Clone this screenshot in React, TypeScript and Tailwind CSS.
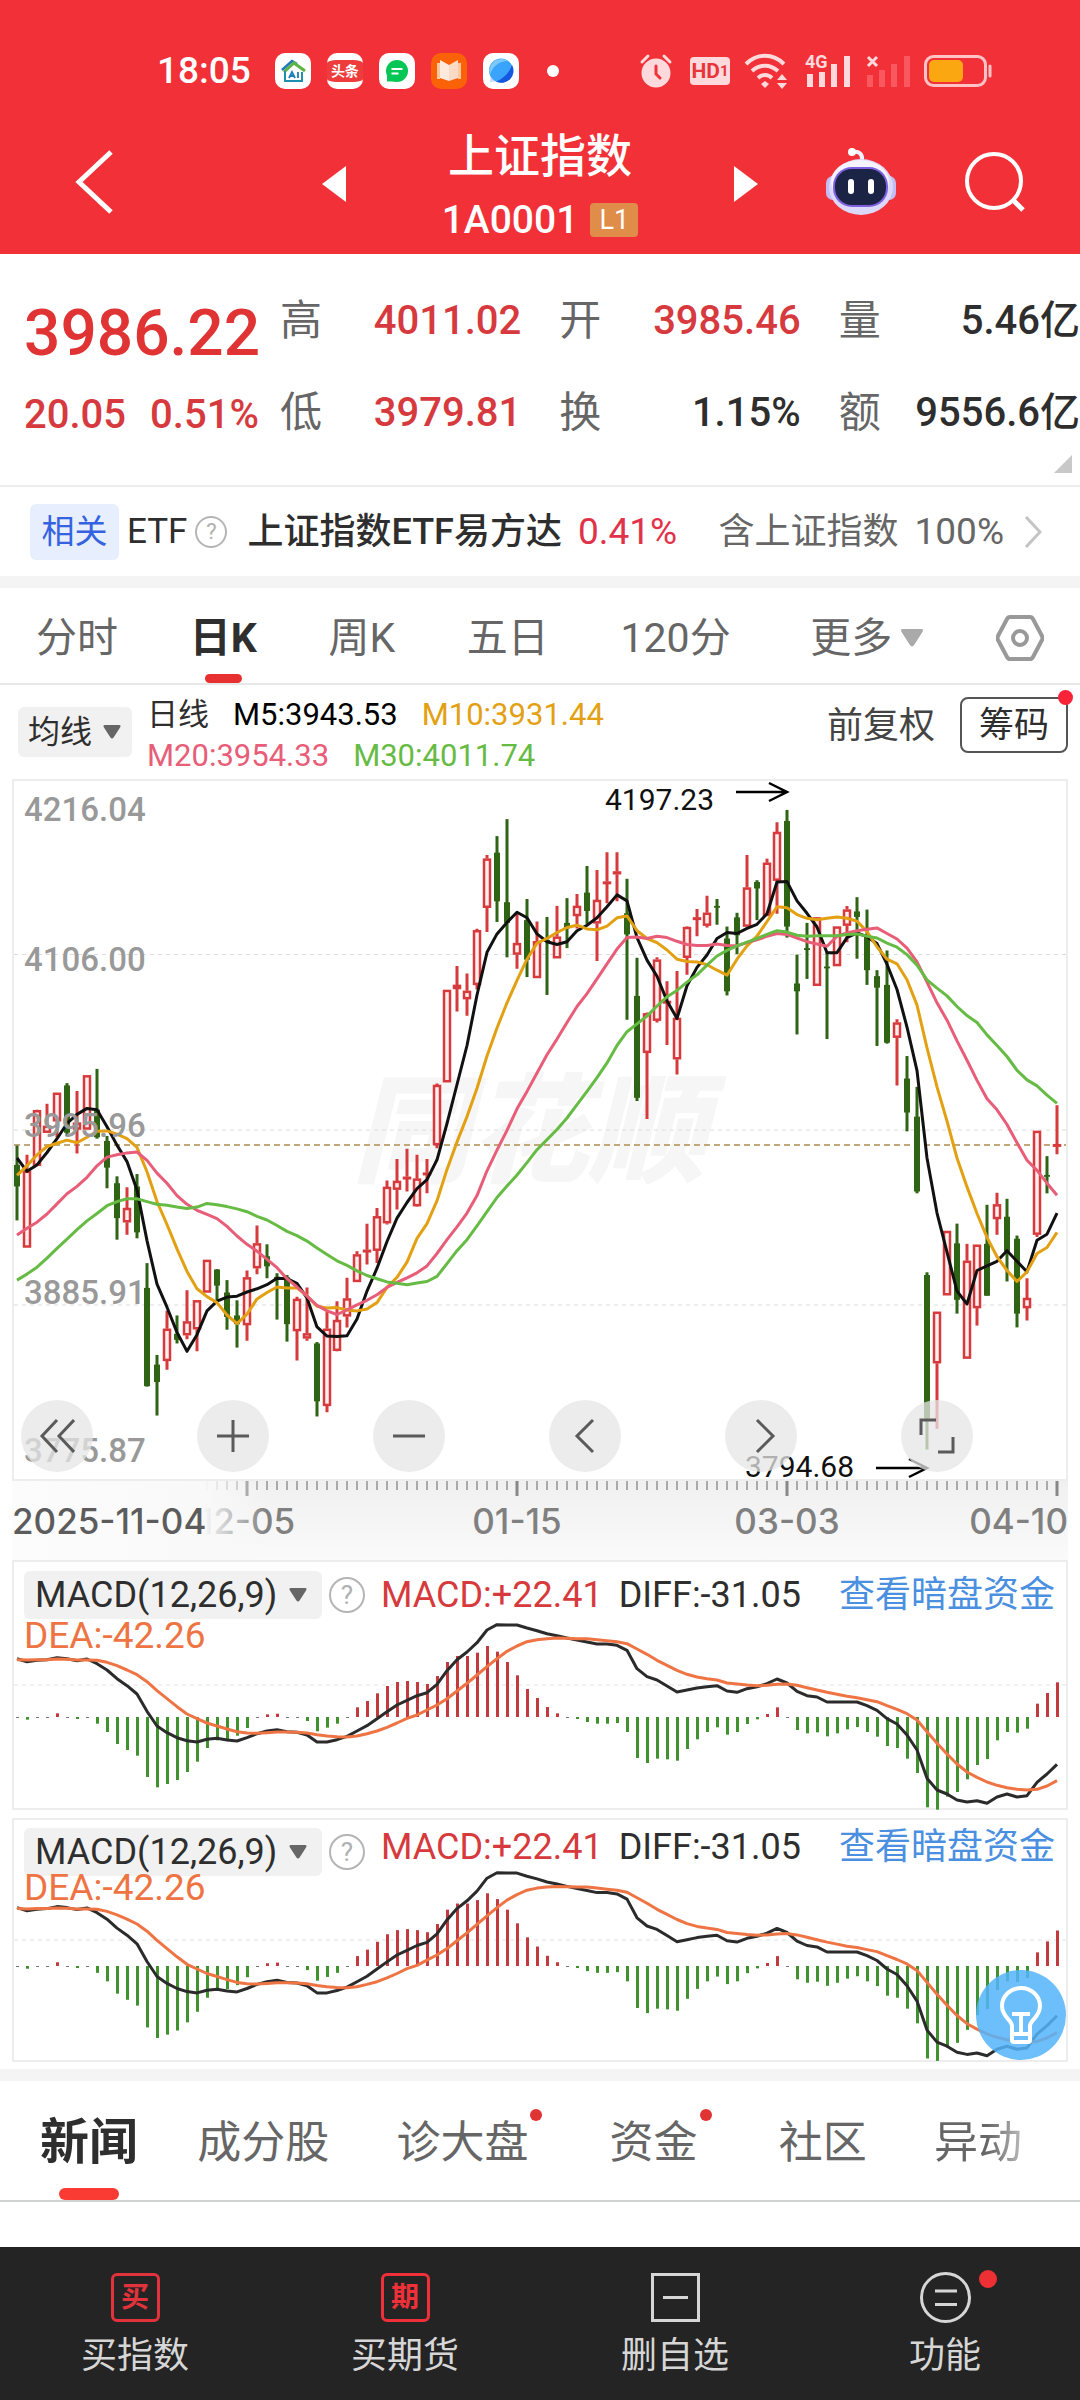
import React from "react";

type Candle = [up: 0 | 1, high: number, top: number, bottom: number, low: number];

const candles: Candle[] = [
  [0, 818, 860, 907, 981], [1, 838, 873, 1040, 1040], [1, 740, 741, 862, 862], [1, 727, 775, 790, 790],
  [1, 703, 703, 765, 800], [0, 682, 687, 790, 798], [1, 699, 768, 783, 835], [1, 665, 665, 783, 783],
  [0, 651, 740, 800, 803], [0, 797, 808, 866, 911], [0, 885, 900, 976, 1023], [1, 909, 954, 985, 1012],
  [0, 880, 907, 1007, 1020], [0, 1074, 1128, 1342, 1343], [0, 1274, 1295, 1333, 1406], [1, 1178, 1217, 1287, 1306],
  [0, 1188, 1228, 1241, 1249], [1, 1133, 1201, 1231, 1240], [1, 1155, 1155, 1218, 1266], [1, 1067, 1067, 1138, 1138],
  [0, 1087, 1088, 1123, 1155], [0, 1111, 1138, 1191, 1219], [0, 1155, 1188, 1207, 1258], [1, 1090, 1105, 1209, 1243],
  [1, 992, 1031, 1085, 1098], [0, 1033, 1059, 1081, 1107], [0, 1096, 1104, 1108, 1197], [0, 1100, 1105, 1207, 1245],
  [1, 1147, 1152, 1222, 1286], [1, 1127, 1227, 1238, 1243], [0, 1246, 1249, 1375, 1408], [1, 1180, 1217, 1385, 1399],
  [1, 1157, 1198, 1265, 1266], [1, 1106, 1151, 1190, 1214], [1, 1048, 1055, 1115, 1115], [1, 988, 1045, 1049, 1077],
  [1, 954, 972, 1047, 1074], [1, 894, 908, 987, 990], [1, 847, 895, 914, 957], [1, 825, 886, 890, 918],
  [1, 838, 890, 950, 951], [1, 847, 877, 881, 922], [1, 683, 686, 817, 824], [1, 479, 479, 680, 680],
  [1, 427, 468, 477, 526], [1, 443, 481, 499, 535], [1, 346, 349, 468, 478], [1, 185, 193, 300, 353],
  [0, 144, 180, 286, 331], [0, 107, 288, 333, 408], [1, 312, 377, 402, 433], [0, 281, 327, 413, 451],
  [1, 330, 373, 453, 453], [0, 320, 370, 374, 490], [1, 296, 363, 410, 410], [0, 279, 333, 345, 388],
  [1, 270, 296, 318, 345], [0, 209, 267, 307, 335], [1, 218, 283, 334, 416], [1, 179, 243, 247, 290],
  [1, 179, 221, 227, 286], [0, 237, 312, 358, 544], [0, 409, 492, 714, 721], [1, 528, 530, 616, 760],
  [1, 408, 413, 546, 550], [1, 460, 503, 507, 599], [1, 438, 540, 630, 663], [1, 341, 342, 409, 446],
  [1, 303, 321, 325, 362], [1, 274, 311, 339, 343], [0, 281, 296, 300, 337], [0, 341, 367, 482, 491],
  [0, 311, 321, 360, 401], [1, 185, 256, 341, 341], [0, 240, 244, 258, 327], [1, 193, 202, 318, 318],
  [1, 114, 135, 241, 313], [0, 87, 111, 341, 365], [0, 402, 465, 482, 576], [0, 333, 388, 392, 455],
  [1, 321, 321, 470, 470], [0, 395, 428, 432, 586], [1, 341, 341, 427, 427], [1, 296, 304, 339, 375],
  [0, 277, 308, 320, 411], [0, 304, 360, 436, 468], [0, 436, 449, 474, 601], [0, 393, 468, 594, 596],
  [1, 543, 550, 583, 687], [0, 623, 672, 746, 787], [0, 690, 755, 918, 922], [0, 1094, 1100, 1412, 1480],
  [1, 1180, 1180, 1292, 1435], [1, 1004, 1004, 1144, 1144], [0, 988, 1031, 1154, 1184], [1, 1032, 1069, 1282, 1282],
  [1, 1034, 1034, 1172, 1210], [0, 947, 1032, 1145, 1145], [1, 921, 946, 978, 1012], [0, 934, 973, 1049, 1114],
  [0, 1014, 1021, 1184, 1214], [1, 1107, 1150, 1172, 1199], [1, 786, 786, 1012, 1017], [0, 841, 882, 886, 922],
  [1, 730, 815, 820, 837],
];

const m5 = [
  845, 874, 860, 833, 803, 770, 750, 737, 740, 777, 817, 853, 915, 1025, 1120, 1170, 1225, 1266, 1230, 1178, 1157, 1148, 1146,
  1137, 1130, 1121, 1107, 1108, 1118, 1150, 1213, 1233, 1234, 1232, 1196, 1135, 1085, 1027, 976, 942, 912, 892, 849, 770, 685,
  600, 490, 397, 357, 332, 310, 322, 357, 374, 380, 374, 350, 338, 322, 298, 272, 285, 365, 414, 449, 503, 541, 470, 430, 403,
  367, 354, 356, 345, 336, 313, 244, 243, 285, 312, 342, 398, 398, 365, 355, 363, 378, 423, 478, 560, 655, 845, 965, 1050,
  1135, 1163, 1090, 1080, 1070, 1047, 1070, 1093, 1024, 1011, 965,
];
const m10 = [
  883, 862, 838, 820, 813, 806, 812, 800, 787, 786, 793, 803, 822, 875, 940, 990, 1043, 1092, 1130, 1147, 1160, 1187, 1206,
  1185, 1152, 1138, 1126, 1128, 1128, 1145, 1168, 1172, 1171, 1176, 1178, 1174, 1160, 1127, 1105, 1072, 1020, 988, 938, 870,
  810, 755, 693, 623, 562, 507, 458, 412, 377, 367, 354, 343, 338, 346, 348, 340, 322, 318, 350, 367, 376, 392, 412, 417, 418,
  424, 436, 447, 412, 383, 362, 330, 298, 300, 315, 323, 326, 323, 320, 323, 329, 352, 385, 412, 422, 457, 512, 605, 690, 765,
  845, 908, 966, 1018, 1060, 1090, 1114, 1093, 1053, 1040, 1007,
];
const m20 = [
  1013, 998, 985, 967, 945, 923, 907, 887, 862, 843, 838, 834, 832, 850, 878, 900, 927, 946, 959, 968, 977, 994, 1015, 1033,
  1048, 1066, 1084, 1108, 1126, 1146, 1166, 1178, 1186, 1176, 1165, 1155, 1143, 1127, 1116, 1106, 1095, 1080, 1053, 1023, 995,
  965, 927, 873, 828, 785, 738, 700, 660, 620, 586, 550, 515, 487, 455, 422, 390, 365, 364, 367, 362, 365, 373, 380, 382, 382,
  379, 382, 383, 376, 370, 362, 356, 358, 366, 374, 379, 384, 362, 355, 350, 347, 344, 356, 368, 388, 418, 462, 507, 545, 590,
  632, 676, 716, 740, 772, 812, 850, 872, 900, 926,
];
const m30 = [
  1111, 1098, 1083, 1063, 1042, 1022, 1001, 982, 966, 949, 940, 934, 934, 940, 946, 948, 952, 955, 952, 944, 947, 951, 956, 962,
  972, 980, 992, 1005, 1014, 1026, 1041, 1055, 1069, 1079, 1091, 1101, 1108, 1115, 1118, 1121, 1117, 1114, 1103, 1075, 1047,
  1023, 993, 962, 931, 906, 882, 855, 827, 805, 783, 758, 729, 700, 670, 638, 600, 570, 553, 536, 514, 494, 480, 462, 446, 425,
  405, 393, 383, 375, 367, 358, 350, 353, 360, 362, 361, 361, 361, 358, 357, 362, 366, 377, 386, 402, 425, 457, 475, 492, 515,
  535, 550, 577, 600, 624, 654, 675, 688, 708, 726,
];

const macdBars = [
  0, -8, 0, 0, 11, 0, -6, 0, -20, -45, -81, -99, -116, -180, -211, -201, -189, -165, -134, -93, -70, -68, -56, -33, 0, 8, 10, 0,
  0, -12, -43, -32, -20, 0, 29, 48, 71, 93, 105, 108, 105, 99, 123, 165, 183, 183, 193, 213, 196, 165, 125, 84, 57, 30, 11, 0,
  -6, -15, -20, -20, -18, -45, -123, -138, -125, -127, -131, -96, -67, -45, -31, -53, -45, -21, -7, 9, 29, 0, -39, -49, -46,
  -58, -49, -37, -30, -45, -59, -87, -93, -125, -168, -271, -278, -239, -225, -187, -144, -126, -70, -45, -47, -35, 40, 72, 104,
];
const diff = [
  326, 335, 331, 329, 323, 326, 332, 327, 341, 360, 386, 407, 432, 484, 528, 548, 563, 572, 576, 568, 565, 570, 573, 563, 551,
  543, 539, 545, 547, 555, 576, 576, 569, 559, 543, 527, 506, 485, 465, 451, 437, 428, 403, 362, 329, 306, 278, 240, 224, 225,
  225, 234, 242, 251, 257, 264, 270, 276, 282, 282, 286, 301, 356, 380, 390, 408, 426, 420, 414, 410, 407, 423, 427, 416, 410,
  401, 387, 399, 424, 437, 441, 456, 456, 456, 456, 467, 481, 506, 522, 555, 600, 685, 720, 732, 750, 756, 752, 760, 741, 732,
  741, 737, 697, 672, 643,
];
const dea = [
  329, 330, 329, 329, 327, 328, 330, 330, 331, 337, 347, 360, 374, 395, 422, 446, 470, 492, 506, 519, 528, 537, 545, 549, 550,
  548, 546, 546, 547, 549, 554, 558, 560, 561, 558, 551, 543, 532, 519, 505, 495, 480, 465, 446, 423, 400, 375, 350, 326, 304,
  288, 275, 269, 266, 264, 265, 266, 266, 269, 272, 275, 281, 297, 313, 331, 346, 361, 373, 381, 386, 390, 399, 402, 405, 407,
  406, 403, 402, 406, 413, 420, 427, 433, 439, 443, 449, 455, 467, 478, 491, 510, 545, 580, 612, 642, 666, 682, 696, 706, 713,
  718, 720, 718, 708, 692,
];

const STEP = 10;
const dayX = (i: number) => 3 + i * STEP;
const priceY = (v: number) => v / 2.178 - 11;
const points = (values: number[], y: (v: number) => number) =>
  values.map((v, i) => `${dayX(i)},${y(v).toFixed(1)}`).join(" ");

function StatusBar() {
  return (
    <div className="flex h-[94px] items-center pt-[48px] pr-[88px] pl-[157px] text-white">
      <span className="mr-6 text-[37px] leading-[44px] font-medium">18:05</span>
      <div className="flex items-center gap-4">
        <svg className="size-9" viewBox="0 0 36 36" aria-hidden="true">
          <rect width="36" height="36" rx="10" fill="#fff" />
          <path d="M7 17 17 8l5 3" fill="none" stroke="#1e78b8" strokeWidth="2.500" />
          <path d="M9 19 19 10l11 8" fill="none" stroke="#5db344" strokeWidth="3" />
          <path d="M10 18v10h17v-9" fill="none" stroke="#1e8fb0" strokeWidth="2" />
          <path d="M14 25l3-6 3 6M15 23h4M23 19v6" fill="none" stroke="#1c7fb5" strokeWidth="1.800" />
        </svg>
        <span className="flex size-9 flex-col items-center justify-center overflow-hidden rounded-[10px] border-y-[7px] border-white bg-[#ee3b3b] text-[14px] leading-[22px] font-bold">
          头条
        </span>
        <svg className="size-9" viewBox="0 0 36 36" aria-hidden="true">
          <rect width="36" height="36" rx="10" fill="#fff" />
          <circle cx="18" cy="18" r="11" fill="#06c755" />
          <path d="M8 28.500V18h10v10.500z" fill="#06c755" />
          <path d="M12.500 16h11M12.500 20.500h7" stroke="#fff" strokeWidth="2" />
        </svg>
        <svg className="size-9" viewBox="0 0 36 36" aria-hidden="true">
          <rect width="36" height="36" rx="10" fill="#fb6208" />
          <path d="M6 10h3v16H6zM27 10h3v16h-3z" fill="#fbc7a0" />
          <path d="M9 7l9 5v16l-9-3z" fill="#fdeadd" />
          <path d="M27 7l-9 5v16l9-3z" fill="#fbdac6" />
        </svg>
        <svg className="size-9" viewBox="0 0 36 36" aria-hidden="true">
          <rect width="36" height="36" rx="10" fill="#fff" />
          <path d="M7 29l1-9 8 8z" fill="#c9d8fb" />
          <circle cx="18" cy="17.500" r="12" fill="#3aa3fb" />
          <path d="M13 28.500C22 25 27 18 29 12a12 12 0 0 1-16 16.500z" fill="#1458e0" />
          <path d="M7 22C9 14 16 8 25 8A12 12 0 0 0 7 22z" fill="#7cc8fd" />
        </svg>
      </div>
      <span className="ml-7 size-3 rounded-full bg-white" />
      <div className="ml-auto flex items-center gap-[14px]">
        <svg className="mr-[3px] h-9 w-[34px]" viewBox="0 0 34 36" aria-hidden="true">
          <circle cx="17" cy="20" r="14.500" fill="#ffd9db" />
          <path d="M3 9 9 3M31 9l-6-6" stroke="#ffd9db" strokeWidth="3" strokeLinecap="round" />
          <path d="M17 13v8l4 4" fill="none" stroke="#f13239" strokeWidth="3" strokeLinecap="round" />
        </svg>
        <span className="flex h-7 w-10 items-center justify-center rounded-[4px] bg-[#ffd9db] text-[21px] leading-[28px] font-bold text-[#e8343b]">
          HD<span className="text-[15px]">1</span>
        </span>
        <svg className="h-9 w-[46px]" viewBox="0 0 46 36" fill="none" stroke="#ffd9db" strokeWidth="4" aria-hidden="true">
          <path d="M2 11c11-11 27-11 38 0" />
          <path d="M8 18c8-7 18-7 26 0" />
          <path d="M14 25c4-4 10-4 14 0" />
          <path d="M21 28l4 3-4 4-4-4z" fill="#ffd9db" stroke="none" />
          <path d="M33 27l5-6 5 6zM33 30l5 6 5-6z" fill="#ffd9db" stroke="none" />
        </svg>
        <svg className="h-9 w-[48px] overflow-visible" viewBox="0 0 48 36" aria-hidden="true">
          <text x="1" y="15" fontSize="18" fontWeight="700" fill="#ffd9db">4G</text>
          <path d="M6 21v13M18 19v15M30 11v23M43 3v31" stroke="#ffd9db" strokeWidth="6" />
        </svg>
        <svg className="h-9 w-[44px]" viewBox="0 0 44 36" aria-hidden="true">
          <path d="M2 4l9 9M11 4l-9 9" stroke="#ffd9db" strokeWidth="3" />
          <path d="M4 22v12M16 17v17M28 11v23M41 3v31" stroke="#f8585e" strokeWidth="6" />
        </svg>
        <svg className="h-8 w-[68px]" viewBox="0 0 68 32" aria-hidden="true">
          <rect x="1.500" y="1.500" width="60" height="29" rx="8" fill="none" stroke="#ffc2c5" strokeWidth="3" />
          <rect x="5" y="5" width="34" height="22" rx="5" fill="#fba712" />
          <path d="M66 11v10" stroke="#ffc2c5" strokeWidth="3" strokeLinecap="round" />
        </svg>
      </div>
    </div>
  );
}

function Robot() {
  return (
    <svg className="h-[70px] w-[72px]" viewBox="0 0 72 70" aria-hidden="true">
      <path d="M37 14c1-7-3-10-9-9" fill="none" stroke="#f4f1ff" strokeWidth="4" strokeLinecap="round" />
      <circle cx="27" cy="5" r="4" fill="#fff" />
      <rect x="1" y="29" width="14" height="24" rx="7" fill="#c3bdf3" />
      <rect x="57" y="29" width="14" height="24" rx="7" fill="#c3bdf3" />
      <ellipse cx="36" cy="40" rx="32" ry="28" fill="#dcd8fa" />
      <ellipse cx="35" cy="35" rx="29" ry="22" fill="#f5f3ff" />
      <rect x="8" y="20" width="55" height="40" rx="19" fill="#7e5fe0" />
      <rect x="10" y="22" width="51" height="36" rx="17" fill="#1b2444" />
      <rect x="23" y="32" width="6" height="15" rx="3" fill="#fff" />
      <rect x="43" y="32" width="6" height="15" rx="3" fill="#fff" />
    </svg>
  );
}

function Header() {
  return (
    <header className="bg-[#f13037] text-white">
      <StatusBar />
      <div className="grid grid-cols-[1fr_436px_1fr] items-center pt-7 pb-1">
        <button className="ml-[74px] mb-2 w-10" aria-label="返回">
          <svg className="h-[64px] w-10" viewBox="0 0 40 64" fill="none" stroke="currentColor" strokeWidth="5" aria-hidden="true">
            <path d="M37 2 5 32l32 30" />
          </svg>
        </button>
        <div className="flex items-center justify-between">
          <button className="mb-1" aria-label="上一个">
            <svg className="h-9 w-6" viewBox="0 0 24 36" fill="currentColor" aria-hidden="true">
              <path d="M24 0v36L0 18z" />
            </svg>
          </button>
          <div className="flex flex-col items-center">
            <h1 className="text-[46px] leading-[68px] font-medium">上证指数</h1>
            <div className="flex h-[60px] items-center gap-3">
              <span className="text-[39px] leading-[44px] font-medium">1A0001</span>
              <span className="flex h-[34px] w-12 items-center justify-center rounded-[4px] bg-[#e08d4a] text-[27px] leading-[34px]">
                L1
              </span>
            </div>
          </div>
          <button className="mb-1" aria-label="下一个">
            <svg className="h-9 w-6" viewBox="0 0 24 36" fill="currentColor" aria-hidden="true">
              <path d="M0 0v36l24-18z" />
            </svg>
          </button>
        </div>
        <div className="mb-2 flex items-center justify-between pr-[54px] pl-[67px]">
          <button aria-label="智能助手">
            <Robot />
          </button>
          <button aria-label="搜索">
            <svg className="size-[62px]" viewBox="0 0 62 62" fill="none" stroke="currentColor" strokeWidth="4" aria-hidden="true">
              <circle cx="30" cy="30" r="27" />
              <path d="M49 49l10 10" strokeWidth="5" />
            </svg>
          </button>
        </div>
      </div>
    </header>
  );
}

const quotes = [
  { label: "高", value: "4011.02", up: true },
  { label: "开", value: "3985.46", up: true },
  { label: "量", value: "5.46亿", up: false },
  { label: "低", value: "3979.81", up: true },
  { label: "换", value: "1.15%", up: false },
  { label: "额", value: "9556.6亿", up: false },
];

function Quote() {
  return (
    <section className="relative flex border-b-2 border-[#ececec] pt-[21px] pb-[26px] pl-6">
      <div className="w-[256px] shrink-0 text-[#e03333]">
        <p className="text-[64px] leading-[118px] font-medium">3986.22</p>
        <p className="flex gap-6 text-[40px] leading-[44px] font-medium text-[#d63a3e]">
          <span>20.05</span>
          <span>0.51%</span>
        </p>
      </div>
      <dl className="grid flex-1 grid-cols-3 gap-x-[38px] text-[40px] leading-[92px] whitespace-nowrap">
        {quotes.map((q) => (
          <div key={q.label} className="flex justify-between">
            <dt className="text-[42px] text-[#666]">{q.label}</dt>
            <dd className={q.up ? "font-medium text-[#d63a3e]" : "font-medium text-[#2e2e2e]"}>{q.value}</dd>
          </div>
        ))}
      </dl>
      <svg className="absolute right-2 bottom-3 size-[18px]" viewBox="0 0 18 18" fill="#c8c8c8" aria-hidden="true">
        <path d="M18 0v18H0z" />
      </svg>
    </section>
  );
}

function Help({ className }: { className: string }) {
  return (
    <button
      aria-label="说明"
      className={`flex items-center justify-center rounded-full border-2 border-[#b5b5b5] text-[#b0b0b0] ${className}`}
    >
      ?
    </button>
  );
}

function EtfRow() {
  return (
    <section className="flex h-[89px] items-center pr-[38px] pl-[30px] text-[36px] leading-[44px] whitespace-nowrap">
      <span className="flex h-14 w-[89px] items-center justify-center rounded-[6px] bg-[#e7eefd] text-[33px] text-[#3563e0]">相关</span>
      <span className="ml-2 text-[35px] text-[#2e2e2e]">ETF</span>
      <Help className="ml-2 size-8 text-[22px] leading-[28px]" />
      <a href="#etf" className="ml-5 font-medium text-[#2e2e2e]">上证指数ETF易方达</a>
      <span className="ml-4 text-[37px] text-[#e0334a]">0.41%</span>
      <span className="ml-auto text-[#666]">含上证指数</span>
      <span className="ml-4 text-[37px] text-[#666]">100%</span>
      <svg className="ml-5 h-8 w-[18px]" viewBox="0 0 18 32" fill="none" stroke="#c4c4c4" strokeWidth="3" aria-hidden="true">
        <path d="M2 1l14 15L2 31" />
      </svg>
    </section>
  );
}

function Caret({ className }: { className: string }) {
  return (
    <svg className={`pointer-events-none ${className}`} viewBox="0 0 20 16" fill="currentColor" aria-hidden="true">
      <path d="M2 0h16q3 0 1 3l-7 11q-2 3-4 0L1 3Q-1 0 2 0z" />
    </svg>
  );
}

function PeriodTabs() {
  const tab = "text-[#666]";
  return (
    <nav className="flex h-[97px] items-center justify-between border-b-2 border-[#e8e8e8] px-9 pt-1 text-[41px] leading-[52px] whitespace-nowrap">
      <button className={tab}>分时</button>
      <button className="relative flex h-full items-center font-bold text-[#2e2e2e]">
        日K
        <span className="absolute inset-x-[15px] bottom-0 h-[9px] rounded-full bg-[#e83030]" />
      </button>
      <button className={tab}>周K</button>
      <button className={tab}>五日</button>
      <button className={tab}>120分</button>
      <button className="ml-2 flex items-center gap-2 text-[#666]">
        更多
        <Caret className="h-[18px] w-6 text-[#aaa]" />
      </button>
      <button aria-label="设置">
        <svg className="h-[46px] w-12" viewBox="0 0 48 46" fill="none" stroke="#999" strokeWidth="4" aria-hidden="true">
          <path d="M14 2h20q2 0 3 2l9 17q1 2 0 4l-9 17q-1 2-3 2H14q-2 0-3-2L2 25q-1-2 0-4l9-17q1-2 3-2z" />
          <circle cx="24" cy="23" r="7" />
        </svg>
      </button>
    </nav>
  );
}

function AverageBar() {
  return (
    <section className="flex h-[94px] items-center pr-3 pl-[18px] whitespace-nowrap">
      <label className="flex h-[50px] items-center rounded-[6px] bg-[#f1f1f1] px-[10px] text-[32px] text-[#2e2e2e]">
        <select aria-label="指标" className="w-[64px] appearance-none bg-transparent leading-[44px] outline-none">
          <option>均线</option>
        </select>
        <Caret className="ml-[10px] h-[14px] w-5 text-[#666]" />
      </label>
      <div className="mt-[6px] ml-[15px] text-[31px] leading-[41px]">
        <p className="flex gap-6">
          <span className="text-[#2e2e2e]">日线</span>
          <span className="text-black">M5:3943.53</span>
          <span className="text-[#e2a012]">M10:3931.44</span>
        </p>
        <p className="flex gap-6">
          <span className="text-[#e85d78]">M20:3954.33</span>
          <span className="text-[#66bb44]">M30:4011.74</span>
        </p>
      </div>
      <div className="mb-[14px] ml-auto flex items-center gap-[25px] text-[#444]">
        <button className="pt-[2px] text-[36px] leading-[44px]">前复权</button>
        <button className="relative h-14 w-[108px] rounded-[8px] border-2 border-[#555] pt-[2px] text-[35px] leading-[44px] text-[#2e2e2e]">
          筹码
          <span className="absolute -top-[9px] -right-[7px] size-[15px] rounded-full bg-[#fb2338]" />
        </button>
      </div>
    </section>
  );
}

const priceLabels: [string, number][] = [
  ["4216.04", 40], ["4106.00", 190], ["3995.96", 356], ["3885.91", 523], ["3775.87", 681],
];

const controls: [string, string][] = [
  ["最左", "M18 2 3 18l15 16M35 2 20 18l15 16"],
  ["放大", "M2 18h32M18 2v32"],
  ["缩小", "M2 18h32"],
  ["向左", "M26 2 10 18l16 16"],
  ["向右", "M14 2l16 16-16 16"],
  ["全屏", "M2 17V2h15M34 19v15H19"],
];

function PriceChart() {
  return (
    <section className="relative mx-3 border-2 border-[#ededed]">
      <svg className="block w-full overflow-visible" viewBox="0 0 1052 698" role="img" aria-label="日K线">
        <text x="338" y="392" fontSize="118" fontWeight="900" fontStyle="italic" fill="#f6f6f6">同花顺</text>
        <path d="M0 173.500h1052M0 349h1052M0 524h1052" stroke="#dcdcdc" strokeWidth="1" strokeDasharray="4 4" />
        <path d="M0 364h1052" stroke="#c2a878" strokeWidth="2" strokeDasharray="6 4" />
        {candles.map(([up, high, top, bottom, low], i) => {
          const x = dayX(i);
          const t = priceY(top);
          const b = priceY(bottom);
          return up ? (
            <g key={i} stroke="#d63a3c" strokeWidth="2.500" fill="#fdeeee">
              <path d={`M${x} ${priceY(high)}V${t}M${x} ${b}V${priceY(low)}`} strokeWidth="3" />
              <rect x={x - 3} y={t + 1} width="6" height={Math.max(b - t - 2, 0.5)} />
            </g>
          ) : (
            <g key={i} fill="#2f6415">
              <rect x={x - 1.5} y={priceY(high)} width="3" height={priceY(low) - priceY(high)} />
              <rect x={x - 3} y={t} width="6" height={b - t} />
            </g>
          );
        })}
        <g fill="none" strokeWidth="3" strokeLinejoin="round">
          <polyline points={points(m5, priceY)} stroke="#111" />
          <polyline points={points(m10, priceY)} stroke="#e2a012" />
          <polyline points={points(m20, priceY)} stroke="#e85d78" />
          <polyline points={points(m30, priceY)} stroke="#66bb44" />
        </g>
        <g fontSize="33" fontWeight="500" fill="#999">
          {priceLabels.map(([label, y]) => (
            <text key={label} x="10" y={y}>{label}</text>
          ))}
        </g>
        <g fontSize="30" fill="#111">
          <text x="591" y="29">4197.23</text>
          <text x="731" y="696">3794.68</text>
        </g>
        <path d="M722 11h50M755 2l18 9-18 9M862 687h50M895 678l18 9-18 9" fill="none" stroke="#000" strokeWidth="2.500" />
      </svg>
      <div className="absolute -inset-x-[2px] bottom-[7px] grid grid-cols-6">
        {controls.map(([label, d]) => (
          <button
            key={label}
            aria-label={label}
            className="ml-[9px] flex size-[72px] items-center justify-center rounded-full bg-[#e6e6e6]/75"
          >
            <svg className="size-9" viewBox="0 0 36 36" fill="none" stroke="#5a5a5a" strokeWidth="3" aria-hidden="true">
              <path d={d} />
            </svg>
          </button>
        ))}
      </div>
    </section>
  );
}

function DateAxis() {
  const ticks = candles.map((_, i) => i).filter((i) => (i - 23) % 27 !== 0 && i > 15);
  return (
    <div className="mx-3 bg-gradient-to-b from-[#f0f0f0] to-[#fafafa]">
      <svg className="block w-full" viewBox="0 0 1056 79" role="img" aria-label="日期">
        <defs>
          <linearGradient id="axis-fade">
            <stop offset="0" stopColor="#fcfcfc" />
            <stop offset="0.750" stopColor="#f9f9f9" />
            <stop offset="1" stopColor="#f9f9f9" stopOpacity="0" />
          </linearGradient>
        </defs>
        <path d={ticks.map((i) => `M${dayX(i) + 2} 0v9`).join("")} stroke="#aaa" strokeWidth="2" />
        <path d="M235 0v15M505 0v15M775 0v15M1045 0v15" stroke="#888" strokeWidth="3" />
        <g fontFamily="Inter, sans-serif" fontSize="35" fontWeight="500" fill="#808080">
          <text x="235" y="53" textAnchor="middle">12-05</text>
          <text x="505" y="53" textAnchor="middle">01-15</text>
          <text x="775" y="53" textAnchor="middle">03-03</text>
          <text x="1056" y="53" textAnchor="end">04-10</text>
          <rect width="255" height="79" fill="url(#axis-fade)" />
          <text x="0" y="53" fill="#5c5c5c">2025-11-04</text>
        </g>
      </svg>
    </div>
  );
}

interface MacdProps {
  id: string;
  height: number;
  zero: number;
  grid: number;
  gain: number;
  shift: number;
  rowClass: string;
  valueClass: string;
  deaClass: string;
  children?: React.ReactNode;
}

function MacdPanel({ id, height, zero, grid, gain, shift, rowClass, valueClass, deaClass, children }: MacdProps) {
  const lineY = (v: number) => zero + ((v - 501) * gain + shift) / 3;
  return (
    <section className="relative mx-3 border-2 border-[#ededed] bg-white">
      <svg className="block w-full overflow-visible" viewBox={`0 0 1052 ${height}`} role="img" aria-label="MACD">
        <path d={`M0 ${grid}h1052`} stroke="#e2e2e2" strokeWidth="1" strokeDasharray="4 4" />
        {macdBars.map((v, i) => {
          const h = Math.max((Math.abs(v) * gain) / 3, 1);
          return (
            <rect
              key={i}
              x={dayX(i) - 1}
              y={v > 0 ? zero - h : zero}
              width={3}
              height={h}
              fill={v > 0 ? "#c23a3e" : v < 0 ? "#3f922e" : "#777"}
            />
          );
        })}
        <g fill="none" strokeWidth="3" strokeLinejoin="round">
          <polyline points={points(diff, lineY)} stroke="#2b2b2b" />
          <polyline points={points(dea, lineY)} stroke="#ee7444" />
        </g>
      </svg>
      <div className={`absolute inset-x-0 top-0 text-[36px] whitespace-nowrap ${rowClass}`}>
        <div className="flex items-center pr-[11px] pl-[10px]">
          <label className="flex h-12 w-[298px] shrink-0 items-center rounded-[6px] bg-[#f1f1f1] pl-[11px] text-[#2e2e2e]">
            <select aria-label={`副图指标${id}`} className="w-[244px] appearance-none bg-transparent leading-[48px] outline-none">
              <option>MACD(12,26,9)</option>
            </select>
            <Caret className="ml-[9px] h-[14px] w-5 text-[#666]" />
          </label>
          <Help className="ml-[7px] size-9 shrink-0 text-[26px] leading-[32px]" />
          <div className={`flex flex-1 items-center ${valueClass}`}>
            <span className="ml-4 text-[#d63a3c]">MACD:+22.41</span>
            <span className="ml-4 text-[#2e2e2e]">DIFF:-31.05</span>
            <a href="#funds" className="ml-auto text-[#4a8fe0]">查看暗盘资金</a>
          </div>
        </div>
        <p className={`pl-[10px] text-[37px] text-[#ee7444] ${deaClass}`}>DEA:-42.26</p>
      </div>
      {children}
    </section>
  );
}

const sections = [
  { label: "成分股", dot: false },
  { label: "诊大盘", dot: true },
  { label: "资金", dot: true },
  { label: "社区", dot: false },
];

function InfoTabs() {
  return (
    <nav className="flex h-[121px] items-center justify-between border-b-2 border-[#cfd2d2] pt-1 pr-[58px] pl-10 text-[44px] leading-[60px] whitespace-nowrap text-[#666]">
      <button className="relative mr-[-8px] flex h-full items-center text-[49px] font-bold text-[#2e2e2e]">
        新闻
        <span className="absolute inset-x-[19px] bottom-0 h-3 rounded-full bg-[#f93b33]" />
      </button>
      {sections.map((s) => (
        <button key={s.label} className={s.dot ? "relative pr-[14px]" : ""}>
          {s.label}
          {s.dot && <span className="absolute -top-1 right-0 size-3 rounded-full bg-[#e03333]" />}
        </button>
      ))}
      <button className="bg-gradient-to-r from-[#666] from-60% to-[#bbb] bg-clip-text text-transparent">异动</button>
    </nav>
  );
}

function BottomNav() {
  const item = "flex flex-col items-center gap-[9px]";
  return (
    <nav className="grid grid-cols-4 bg-[#242424] pt-[26px] pb-[19px] text-[36px] leading-[50px] text-[#d6d6d6]">
      <button className={item}>
        <span className="flex size-[49px] items-center justify-center rounded-[6px] border-3 border-[#e2333d] text-[28px] leading-[40px] font-bold text-[#e2333d]">
          买
        </span>
        买指数
      </button>
      <button className={item}>
        <span className="flex size-[49px] items-center justify-center rounded-[6px] border-3 border-[#f03038] text-[28px] leading-[40px] font-bold text-[#f03038]">
          期
        </span>
        买期货
      </button>
      <button className={item}>
        <svg className="size-[49px]" viewBox="0 0 49 49" fill="none" stroke="currentColor" strokeWidth="3" aria-hidden="true">
          <path d="M1.500 1.500h46v46h-46zM12 24.500h25" />
        </svg>
        删自选
      </button>
      <button className={item}>
        <span className="relative">
          <svg className="size-[49px] overflow-visible" viewBox="0 0 49 49" fill="none" stroke="currentColor" strokeWidth="3" aria-hidden="true">
            <circle cx="24.500" cy="24.500" r="24" />
            <path d="M14 18h22M14 31.500h22" />
          </svg>
          <span className="absolute -top-[3px] -right-[27px] size-[18px] rounded-full bg-[#ee3034]" />
        </span>
        功能
      </button>
    </nav>
  );
}

export default function App() {
  return (
    <div className="flex min-h-screen flex-col bg-white font-['Roboto','Noto_Sans_CJK_SC',sans-serif]">
      <Header />
      <main className="flex flex-1 flex-col">
        <Quote />
        <EtfRow />
        <div className="h-3 bg-[#f4f4f4]" />
        <PeriodTabs />
        <AverageBar />
        <PriceChart />
        <DateAxis />
        <MacdPanel
          id="一"
          height={246}
          zero={155}
          grid={123}
          gain={1}
          shift={0}
          rowClass="pt-[9px]"
          valueClass="leading-[48px]"
          deaClass="leading-[34px]"
        />
        <div className="h-2" />
        <MacdPanel
          id="二"
          height={240}
          zero={146}
          grid={120}
          gain={1.024}
          shift={4}
          rowClass="pt-2"
          valueClass="self-start leading-[38px]"
          deaClass="leading-[24px]"
        >
          <button aria-label="提示" className="absolute right-0 bottom-0 flex size-[90px] items-center justify-center rounded-full bg-[#53b4fa]/85">
            <svg className="h-[58px] w-[42px]" viewBox="0 0 42 58" fill="none" stroke="#fff" strokeWidth="4" strokeLinejoin="round" aria-hidden="true">
              <path d="M12 40c0-6-10-9-10-20a19 18 0 0 1 38 0c0 11-10 14-10 20v14q0 2-2 2H14q-2 0-2-2z" />
              <path d="M12 28h18M21 28v18M13 48h16" />
            </svg>
          </button>
        </MacdPanel>
        <div className="mt-[7px] h-3 bg-[#f4f4f4]" />
        <InfoTabs />
      </main>
      <BottomNav />
    </div>
  );
}
